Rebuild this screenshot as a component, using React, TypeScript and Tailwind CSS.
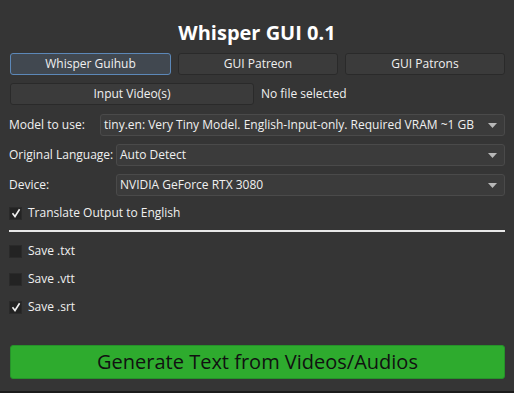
import { useState } from 'react'

const FONT = { fontFamily: '"Open Sans", "Noto Sans", sans-serif' }

function Caret() {
  return (
    <svg width="9" height="5" viewBox="0 0 9 5" className="shrink-0">
      <path d="M0 0 H9 L4.5 5 Z" fill="#b8b8b8" />
    </svg>
  )
}

function Check({ checked, label }: { checked: boolean; label: string }) {
  return (
    <div className="flex h-[14px] items-center gap-[6px] pl-[9px]">
      <span className="flex size-[13px] items-center justify-center border border-[#2a2a2a] bg-[#232323]">
        {checked && (
          <svg width="10" height="10" viewBox="0 0 10 10">
            <path d="M1.5 5.2 L4 8.5 L8.6 1.2" fill="none" stroke="#f0f0f0" strokeWidth="1.6" />
          </svg>
        )}
      </span>
      <span className="text-[12px] text-[#f0f0f0]">{label}</span>
    </div>
  )
}

function Combo({ value }: { value: string }) {
  return (
    <div className="flex h-[22px] flex-1 items-center justify-between rounded-[3px] border border-[#4a4a4a] bg-[#3b3b3b] pl-[3px] pr-[7px] text-[12px] text-[#f0f0f0]">
      <span>{value}</span>
      <Caret />
    </div>
  )
}

export default function App() {
  const [active] = useState(0)
  const links = ['Whisper Guihub', 'GUI Patreon', 'GUI Patrons']

  return (
    <div className="h-[393px] w-[514px] bg-[#353535] text-[#f0f0f0]" style={FONT}>
      <div className="flex h-[391px] flex-col px-[9px]">
        <h1 className="pt-[19px] text-center text-[20px] leading-[28px] font-bold text-white">Whisper GUI 0.1</h1>

        <div className="mt-[6px] flex gap-[7px] pl-[1px]">
          {links.map((l, i) => (
            <button
              key={l}
              className={
                i === active
                  ? 'h-[22px] w-[161px] rounded-[3px] border border-[#5c88b8] bg-[#414850] text-[12px] text-[#f0f0f0]'
                  : 'h-[22px] w-[160px] rounded-[3px] border border-[#2a2a2a] bg-[#3b3b3b] text-[12px] text-[#f0f0f0]'
              }
            >
              {l}
            </button>
          ))}
        </div>

        <div className="mt-[8px] flex items-center gap-[7px] pl-[1px]">
          <button className="h-[22px] w-[244px] rounded-[3px] border border-[#2a2a2a] bg-[#3b3b3b] text-[12px]">Input Video(s)</button>
          <span className="text-[12px]">No file selected</span>
        </div>

        <div className="mt-[9px] flex items-center">
          <span className="w-[91px] text-[12px]">Model to use:</span>
          <Combo value="tiny.en: Very Tiny Model. English-Input-only. Required VRAM ~1 GB" />
        </div>
        <div className="mt-[8px] flex items-center">
          <span className="w-[107px] text-[12px]">Original Language:</span>
          <Combo value="Auto Detect" />
        </div>
        <div className="mt-[8px] flex items-center">
          <span className="w-[107px] text-[12px]">Device:</span>
          <Combo value="NVIDIA GeForce RTX 3080" />
        </div>

        <div className="-mx-[9px] mt-[10px]">
          <Check checked label="Translate Output to English" />
        </div>

        <div className="mt-[10px] h-[2px] bg-[#e8e8e8]" />

        <div className="-mx-[9px] mt-[12px] flex flex-col gap-[14px]">
          <Check checked={false} label="Save .txt" />
          <Check checked={false} label="Save .vtt" />
          <Check checked label="Save .srt" />
        </div>

        <button className="mt-[31px] ml-[1px] h-[34px] w-[495px] rounded-[3px] border border-[#26922a] bg-[#2eab2e] text-[20px] text-[#111]">
          Generate Text from Videos/Audios
        </button>
      </div>
      <div className="h-[2px] bg-[#1c1c1c]" />
    </div>
  )
}
